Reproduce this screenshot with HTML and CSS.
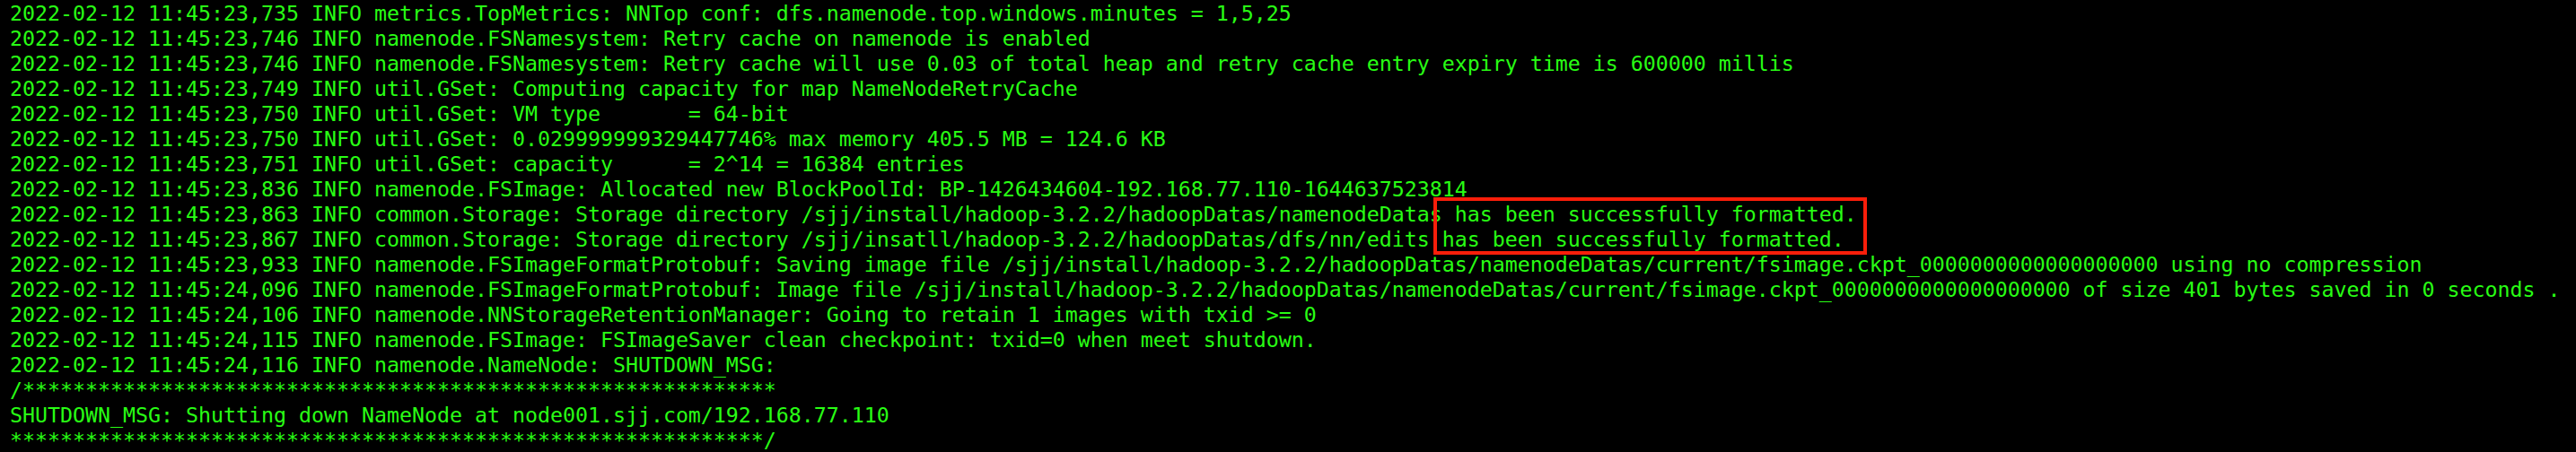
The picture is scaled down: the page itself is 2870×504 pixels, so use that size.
FILE: index.html
```html
<!DOCTYPE html>
<html lang="en">
<head>
<meta charset="utf-8">
<title>Terminal</title>
<link rel="stylesheet" href="styles.css">
</head>
<body>
<div class="terminal">
<pre class="log">2022-02-12 11:45:23,735 INFO metrics.TopMetrics: NNTop conf: dfs.namenode.top.windows.minutes = 1,5,25
2022-02-12 11:45:23,746 INFO namenode.FSNamesystem: Retry cache on namenode is enabled
2022-02-12 11:45:23,746 INFO namenode.FSNamesystem: Retry cache will use 0.03 of total heap and retry cache entry expiry time is 600000 millis
2022-02-12 11:45:23,749 INFO util.GSet: Computing capacity for map NameNodeRetryCache
2022-02-12 11:45:23,750 INFO util.GSet: VM type       = 64-bit
2022-02-12 11:45:23,750 INFO util.GSet: 0.029999999329447746% max memory 405.5 MB = 124.6 KB
2022-02-12 11:45:23,751 INFO util.GSet: capacity      = 2^14 = 16384 entries
2022-02-12 11:45:23,836 INFO namenode.FSImage: Allocated new BlockPoolId: BP-1426434604-192.168.77.110-1644637523814
2022-02-12 11:45:23,863 INFO common.Storage: Storage directory /sjj/install/hadoop-3.2.2/hadoopDatas/namenodeDatas has been successfully formatted.
2022-02-12 11:45:23,867 INFO common.Storage: Storage directory /sjj/insatll/hadoop-3.2.2/hadoopDatas/dfs/nn/edits has been successfully formatted.
2022-02-12 11:45:23,933 INFO namenode.FSImageFormatProtobuf: Saving image file /sjj/install/hadoop-3.2.2/hadoopDatas/namenodeDatas/current/fsimage.ckpt_0000000000000000000 using no compression
2022-02-12 11:45:24,096 INFO namenode.FSImageFormatProtobuf: Image file /sjj/install/hadoop-3.2.2/hadoopDatas/namenodeDatas/current/fsimage.ckpt_0000000000000000000 of size 401 bytes saved in 0 seconds .
2022-02-12 11:45:24,106 INFO namenode.NNStorageRetentionManager: Going to retain 1 images with txid &gt;= 0
2022-02-12 11:45:24,115 INFO namenode.FSImage: FSImageSaver clean checkpoint: txid=0 when meet shutdown.
2022-02-12 11:45:24,116 INFO namenode.NameNode: SHUTDOWN_MSG:
/************************************************************
SHUTDOWN_MSG: Shutting down NameNode at node001.sjj.com/192.168.77.110
************************************************************/</pre>
<div class="highlight"></div>
</div>
</body>
</html>
```
FILE: styles.css
```css
html, body {
  margin: 0;
  padding: 0;
  background: #000;
}

.terminal {
  position: relative;
  width: 2870px;
  height: 504px;
  overflow: hidden;
  background: #000;
}

.log {
  margin: 0;
  padding: 1px 0 0 11px;
  font-family: "DejaVu Sans Mono", "Liberation Mono", monospace;
  font-size: 23.25px;
  line-height: 28px;
  color: #28fe14;
  white-space: pre;
}

.highlight {
  position: absolute;
  left: 1597px;
  top: 220px;
  width: 475px;
  height: 56px;
  border: 4px solid #fa1e0a;
}
```
